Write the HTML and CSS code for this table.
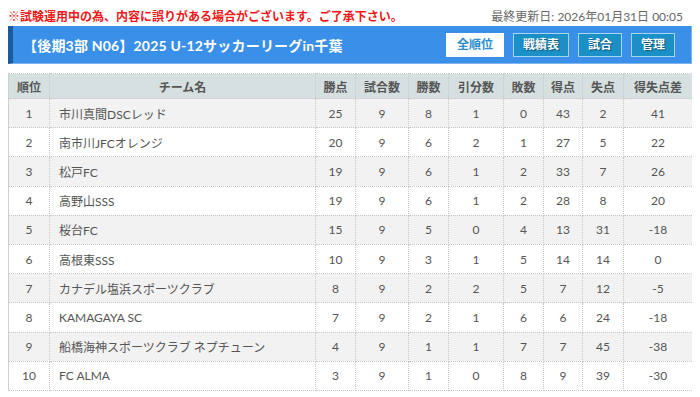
FILE: index.html
```html
<!DOCTYPE html>
<html lang="ja">
<head>
<meta charset="utf-8">
<title>順位表</title>
<link rel="stylesheet" href="styles.css">
</head>
<body>
<div class="topline">
  <p class="notice">※試験運用中の為、内容に誤りがある場合がございます。ご了承下さい。</p>
  <p class="updated">最終更新日: 2026年01月31日 00:05</p>
</div>
<div class="titlebar">
  <h1 class="title">【後期3部 N06】2025 U-12サッカーリーグin千葉</h1>
  <nav class="nav">
    <a class="btn btn-active">全順位</a>
    <a class="btn">戦績表</a>
    <a class="btn">試合</a>
    <a class="btn">管理</a>
  </nav>
</div>
<table class="standings">
  <colgroup>
    <col class="c-rank"><col class="c-team"><col class="c-pts"><col class="c-gp"><col class="c-w"><col class="c-d"><col class="c-l"><col class="c-gf"><col class="c-ga"><col class="c-gd">
  </colgroup>
  <thead>
    <tr><th>順位</th><th>チーム名</th><th>勝点</th><th>試合数</th><th>勝数</th><th>引分数</th><th>敗数</th><th>得点</th><th>失点</th><th>得失点差</th></tr>
  </thead>
  <tbody>
    <tr><td>1</td><td class="team">市川真間DSCレッド</td><td>25</td><td>9</td><td>8</td><td>1</td><td>0</td><td>43</td><td>2</td><td>41</td></tr>
    <tr><td>2</td><td class="team">南市川JFCオレンジ</td><td>20</td><td>9</td><td>6</td><td>2</td><td>1</td><td>27</td><td>5</td><td>22</td></tr>
    <tr><td>3</td><td class="team">松戸FC</td><td>19</td><td>9</td><td>6</td><td>1</td><td>2</td><td>33</td><td>7</td><td>26</td></tr>
    <tr><td>4</td><td class="team">高野山SSS</td><td>19</td><td>9</td><td>6</td><td>1</td><td>2</td><td>28</td><td>8</td><td>20</td></tr>
    <tr><td>5</td><td class="team">桜台FC</td><td>15</td><td>9</td><td>5</td><td>0</td><td>4</td><td>13</td><td>31</td><td>-18</td></tr>
    <tr><td>6</td><td class="team">高根東SSS</td><td>10</td><td>9</td><td>3</td><td>1</td><td>5</td><td>14</td><td>14</td><td>0</td></tr>
    <tr><td>7</td><td class="team">カナデル塩浜スポーツクラブ</td><td>8</td><td>9</td><td>2</td><td>2</td><td>5</td><td>7</td><td>12</td><td>-5</td></tr>
    <tr><td>8</td><td class="team">KAMAGAYA SC</td><td>7</td><td>9</td><td>2</td><td>1</td><td>6</td><td>6</td><td>24</td><td>-18</td></tr>
    <tr><td>9</td><td class="team">船橋海神スポーツクラブ ネプチューン</td><td>4</td><td>9</td><td>1</td><td>1</td><td>7</td><td>7</td><td>45</td><td>-38</td></tr>
    <tr><td>10</td><td class="team">FC ALMA</td><td>3</td><td>9</td><td>1</td><td>0</td><td>8</td><td>9</td><td>39</td><td>-30</td></tr>
  </tbody>
</table>
</body>
</html>
```

FILE: styles.css
```css
* { box-sizing: border-box; }
html, body { background: #fff; }
body {
  margin: 8px;
  font-family: Lato, "Noto Sans CJK JP", sans-serif;
  font-size: 12px;
  color: #555;
}
.topline {
  display: flex;
  justify-content: space-between;
  align-items: center;
  height: 18px;
  padding-right: 9px;
}
.notice, .updated { margin: 0; line-height: 18px; }
.notice { color: #f01818; font-weight: bold; }
.updated { color: #666; }
.titlebar {
  display: flex;
  align-items: center;
  justify-content: space-between;
  height: 38px;
  background: #3a8fe8;
  border-left: 5px solid #1c5aa0;
  border-right: 1px solid #7fb6ef;
  border-bottom: 1px solid #7fb6ef;
  padding: 0 16px 0 10px;
  margin-bottom: 9px;
}
.title {
  margin: 0;
  color: #fff;
  font-size: 14px;
  font-weight: bold;
  letter-spacing: 0.2px;
}
.nav { display: flex; gap: 9px; }
.btn {
  display: block;
  height: 24px;
  line-height: 22px;
  padding: 0 9px;
  border: 1px solid #a9d4ef;
  background: #1a90c6;
  color: #fff;
  font-weight: bold;
  font-size: 12px;
  text-shadow: 1px 1px 1px rgba(0,0,0,0.45);
}
.btn-active {
  background: #fff;
  color: #2a8ccc;
  border-color: #fff;
  text-shadow: none;
  padding: 0 10px;
}
.standings {
  width: 684px;
  border-collapse: collapse;
  table-layout: fixed;
  border-left: 1px solid #cfcfcf;
  border-right: 1px solid #cfcfcf;
}
.c-rank { width: 41px; }
.c-team { width: 266px; }
.c-pts { width: 40px; }
.c-gp { width: 53px; }
.c-w { width: 40px; }
.c-d { width: 55px; }
.c-l { width: 40px; }
.c-gf { width: 39px; }
.c-ga { width: 41px; }
.c-gd { width: 69px; }
.standings th, .standings td {
  border: 1px dotted #c8c8c8;
  text-align: center;
  white-space: nowrap;
  padding: 0;
}
.standings th {
  height: 25px;
  background: #d6e0e0;
  font-weight: bold;
  color: #555;
}
.standings td { height: 29.2px; color: #555; }
.standings tbody tr:nth-child(odd) td { background: #f2f2f2; }
.standings tbody tr:nth-child(even) td { background: #fff; }
.standings td.team { text-align: left; padding-left: 9px; }
```
